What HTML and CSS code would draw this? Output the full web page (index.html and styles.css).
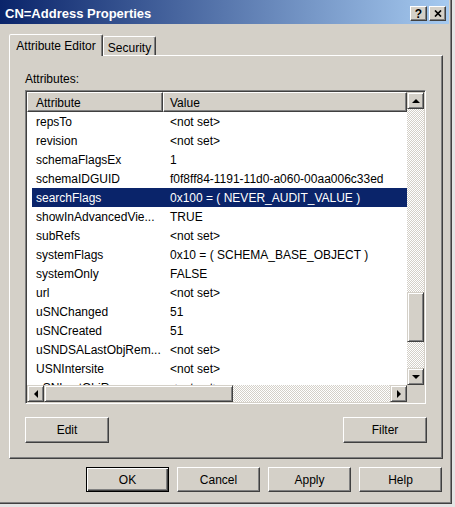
FILE: index.html
```html
<!DOCTYPE html>
<html lang="en">
<head>
  <meta charset="UTF-8" />
  <title>CN=Address Properties</title>
  <link rel="stylesheet" href="styles.css">
</head>
<body>
  <div class="window">
    <div class="titlebar">
      <span class="title">CN=Address Properties</span>
      <div class="caption-buttons">
        <span class="caption-btn help">?</span>
        <span class="caption-btn close">
          <svg width="8" height="7" viewBox="0 0 8 7"><path d="M1 0.5 L7 6.5 M7 0.5 L1 6.5" stroke="#000" stroke-width="1.7"/></svg>
        </span>
      </div>
    </div>

    <!-- tab strip -->
    <div class="tabs">
      <div class="tab active">Attribute Editor</div>
      <div class="tab">Security</div>
    </div>

    <div class="panel">
      <div class="label">Attributes:</div>

      <div class="listview">
        <div class="viewport">
          <div class="lv-header">
            <div class="hcell col-attr">Attribute</div>
            <div class="hcell col-value">Value</div>
          </div>
          <div class="lv-row"><span class="c1">repsTo</span><span class="c2">&lt;not set&gt;</span></div>
          <div class="lv-row"><span class="c1">revision</span><span class="c2">&lt;not set&gt;</span></div>
          <div class="lv-row"><span class="c1">schemaFlagsEx</span><span class="c2">1</span></div>
          <div class="lv-row"><span class="c1">schemaIDGUID</span><span class="c2">f0f8ff84-1191-11d0-a060-00aa006c33ed</span></div>
          <div class="lv-row selected"><span class="c1">searchFlags</span><span class="c2">0x100 = ( NEVER_AUDIT_VALUE )</span></div>
          <div class="lv-row"><span class="c1">showInAdvancedVie...</span><span class="c2">TRUE</span></div>
          <div class="lv-row"><span class="c1">subRefs</span><span class="c2">&lt;not set&gt;</span></div>
          <div class="lv-row"><span class="c1">systemFlags</span><span class="c2">0x10 = ( SCHEMA_BASE_OBJECT )</span></div>
          <div class="lv-row"><span class="c1">systemOnly</span><span class="c2">FALSE</span></div>
          <div class="lv-row"><span class="c1">url</span><span class="c2">&lt;not set&gt;</span></div>
          <div class="lv-row"><span class="c1">uSNChanged</span><span class="c2">51</span></div>
          <div class="lv-row"><span class="c1">uSNCreated</span><span class="c2">51</span></div>
          <div class="lv-row"><span class="c1">uSNDSALastObjRem...</span><span class="c2">&lt;not set&gt;</span></div>
          <div class="lv-row"><span class="c1">USNIntersite</span><span class="c2">&lt;not set&gt;</span></div>
          <div class="lv-row"><span class="c1">uSNLastObjRem</span><span class="c2">&lt;not set&gt;</span></div>
        </div>

        <div class="vscroll">
          <div class="sbtn"><i class="arrow up"></i></div>
          <div class="track"><div class="thumb v-thumb"></div></div>
          <div class="sbtn"><i class="arrow down"></i></div>
        </div>

        <div class="hscroll">
          <div class="sbtn"><i class="arrow left"></i></div>
          <div class="track"><div class="thumb h-thumb"></div></div>
          <div class="sbtn"><i class="arrow right"></i></div>
        </div>
        <div class="corner"></div>
      </div>

      <div class="panel-buttons">
        <div class="btn wide">Edit</div>
        <div class="btn wide">Filter</div>
      </div>
    </div>

    <div class="dialog-buttons">
      <div class="btn default">OK</div>
      <div class="btn">Cancel</div>
      <div class="btn">Apply</div>
      <div class="btn">Help</div>
    </div>
  </div>
</body>
</html>
```

FILE: styles.css
```css
body {
  margin: 0;
  background: #e4e4e4;
  font-family: "Liberation Sans", Arial, sans-serif;
  font-size: 12px;
  color: #000;
}

.window {
  width: 452px;
  height: 504px;
  box-sizing: border-box;
  background: #d4d0c8;
  border-right: 1px solid #404040;
  border-bottom: 1px solid #404040;
  box-shadow: inset -1px -1px #808080;
  display: flex;
  flex-direction: column;
}

/* caption */
.titlebar {
  height: 24px;
  margin-right: 2px;
  box-sizing: border-box;
  padding: 6px 3px 0 5px;
  background: linear-gradient(to right, #0a246a, #a6caf0);
  display: flex;
  align-items: flex-start;
  justify-content: space-between;
}
.title {
  color: #fff;
  font-weight: bold;
  font-size: 13px;
  line-height: 15px;
}
.caption-buttons {
  display: flex;
  gap: 2px;
}
.caption-btn {
  width: 17px;
  height: 15px;
  box-sizing: border-box;
  background: #d4d0c8;
  border: 1px solid;
  border-color: #fff #404040 #404040 #fff;
  box-shadow: inset -1px -1px #808080;
  display: flex;
  align-items: center;
  justify-content: center;
  font-weight: bold;
  font-size: 12px;
  line-height: 12px;
}

/* tabs */
.tabs {
  display: flex;
  align-items: flex-end;
  height: 22px;
  margin: 10px 0 -1px 9px;
  position: relative;
  z-index: 1;
}
.tab {
  box-sizing: border-box;
  height: 19px;
  width: 53px;
  margin-bottom: 1px;
  padding-top: 4px;
  line-height: 14px;
  text-align: center;
  background: #d4d0c8;
  border: 1px solid;
  border-bottom: none;
  border-color: #fff #404040 transparent #fff;
  box-shadow: inset -1px 0 #808080;
  border-radius: 2px 2px 0 0;
}
.tab.active {
  height: 22px;
  width: 94px;
  margin-bottom: 0;
}

/* page */
.panel {
  height: 404px;
  margin: 0 8px 0 9px;
  box-sizing: border-box;
  border: 1px solid;
  border-color: #fff #404040 #404040 #fff;
  box-shadow: inset -1px -1px #808080;
  padding: 16px 15px 0 15px;
}
.label {
  line-height: 14px;
}

.listview {
  width: 401px;
  height: 314px;
  box-sizing: border-box;
  margin-top: 4px;
  border: 1px solid;
  border-color: #808080 #fff #fff #808080;
  box-shadow: inset 1px 1px #404040, inset -1px -1px #d4d0c8;
  padding: 1px;
  background: #fff;
  display: grid;
  grid-template-columns: 1fr 17px;
  grid-template-rows: 1fr 17px;
}
.viewport {
  overflow: hidden;
  background: #fff;
}
.lv-header {
  display: flex;
  height: 20px;
}
.hcell {
  box-sizing: border-box;
  height: 20px;
  padding-top: 3px;
  line-height: 14px;
  background: #d4d0c8;
  border: 1px solid;
  border-color: #fff #404040 #404040 #fff;
  box-shadow: inset -1px -1px #808080;
}
.col-attr {
  width: 136px;
  padding-left: 8px;
}
.col-value {
  flex: 1;
  padding-left: 6px;
}
.lv-row {
  display: flex;
  align-items: center;
  height: 19px;
  margin-left: 5px;
  white-space: nowrap;
}
.lv-row .c1 {
  width: 131px;
  flex: none;
  box-sizing: border-box;
  padding-left: 4px;
}
.lv-row .c2 {
  padding-left: 7px;
}
.lv-row.selected {
  background: #0a246a;
  color: #fff;
}

/* scroll bars */
.vscroll {
  display: flex;
  flex-direction: column;
}
.hscroll {
  display: flex;
}
.sbtn {
  width: 17px;
  height: 17px;
  flex: none;
  box-sizing: border-box;
  background: #d4d0c8;
  border: 1px solid;
  border-color: #d4d0c8 #404040 #404040 #d4d0c8;
  box-shadow: inset 1px 1px #fff, inset -1px -1px #808080;
  display: flex;
  align-items: center;
  justify-content: center;
}
.track {
  flex: 1;
  background: repeating-conic-gradient(#d4d0c8 0 25%, #fff 0 50%) 0 0 / 2px 2px;
}
.hscroll .track {
  display: flex;
}
.thumb {
  box-sizing: border-box;
  background: #d4d0c8;
  border: 1px solid;
  border-color: #d4d0c8 #404040 #404040 #d4d0c8;
  box-shadow: inset 1px 1px #fff, inset -1px -1px #808080;
}
.v-thumb {
  margin-top: 183px;
  height: 50px;
}
.h-thumb {
  width: 189px;
}
.corner {
  background: #d4d0c8;
}

.arrow {
  width: 0;
  height: 0;
  border: 4px solid transparent;
}
.arrow.up {
  border-top: none;
  border-bottom-color: #000;
}
.arrow.down {
  border-bottom: none;
  border-top-color: #000;
}
.arrow.left {
  border-left: none;
  border-right-color: #000;
}
.arrow.right {
  border-right: none;
  border-left-color: #000;
}

/* push buttons */
.panel-buttons {
  display: flex;
  justify-content: space-between;
  margin-top: 13px;
}
.dialog-buttons {
  display: flex;
  justify-content: flex-end;
  gap: 8px;
  margin-top: 8px;
  padding-right: 9px;
}
.btn {
  width: 83px;
  height: 25px;
  box-sizing: border-box;
  background: #d4d0c8;
  border: 1px solid;
  border-color: #fff #404040 #404040 #fff;
  box-shadow: inset -1px -1px #808080;
  display: flex;
  align-items: center;
  justify-content: center;
}
.btn.wide {
  width: 84px;
  height: 26px;
}
.btn.default {
  border-color: #000;
  box-shadow: inset 1px 1px #fff, inset -1px -1px #404040, inset -2px -2px #808080;
}
```
